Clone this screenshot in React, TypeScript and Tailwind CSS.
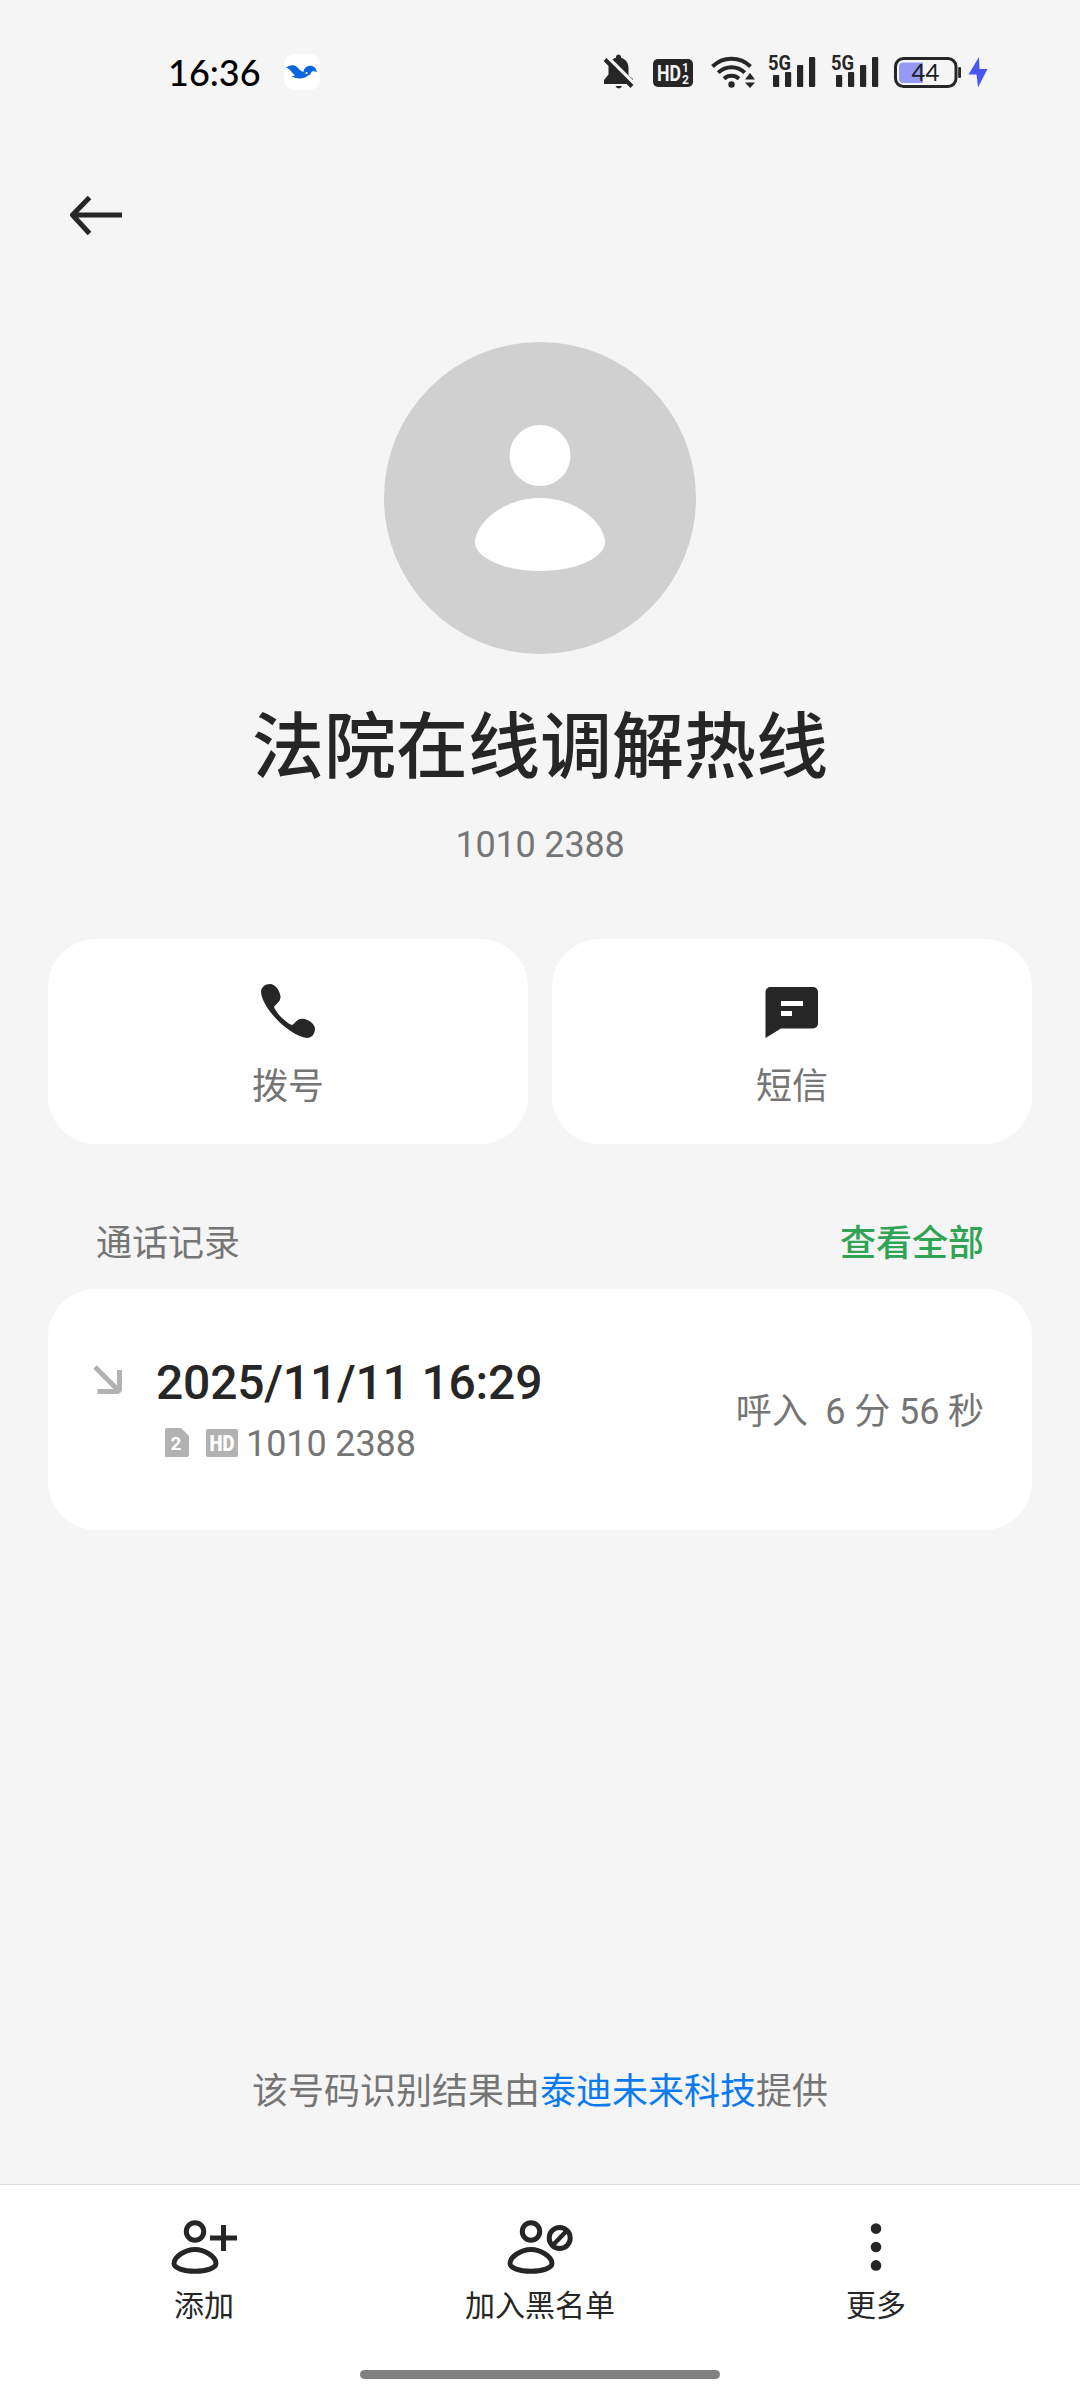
import { ReactNode } from "react";

function BellOffIcon() {
  return (
    <svg width="32" height="36" viewBox="0 0 32 36" className="shrink-0">
      <path
        d="M1 30v-4l4.500-5.500V14C5.500 8.500 8.500 5 13 3.700V2.500a2.600 2.600 0 0 1 5 0v1.200C22.500 5 25.500 8.500 25.500 14v7.500L30 25v5z"
        fill="#262626"
      />
      <path d="M12.500 32h6.500a3.400 3.400 0 0 1-6.500 0z" fill="#262626" />
      <path d="M3 1.500 33 31.500" stroke="#f5f5f5" strokeWidth="3.500" />
      <path d="M2 5.500 29 32.500" stroke="#262626" strokeWidth="4" />
    </svg>
  );
}

function HdBadge() {
  return (
    <svg width="40" height="28" viewBox="0 0 40 28" className="shrink-0 overflow-visible">
      <rect width="40" height="28" rx="5" fill="#262626" />
      <g fill="#f5f5f5" fontFamily="Roboto, sans-serif" fontWeight="700">
        <text x="4" y="22" fontSize="22" textLength="24" lengthAdjust="spacingAndGlyphs">
          HD
        </text>
        <text x="29" y="13" fontSize="12">1</text>
        <text x="29" y="25" fontSize="12">2</text>
      </g>
    </svg>
  );
}

function WifiIcon() {
  return (
    <svg width="44" height="34" viewBox="0 0 44 34" className="shrink-0">
      <g fill="none" stroke="#262626" strokeWidth="4">
        <path d="M1.500 11.500a27 27 0 0 1 38 0" />
        <path d="M7.200 17.600a19 19 0 0 1 26.600 0" />
        <path d="M13 23.700a11 11 0 0 1 15 0" />
      </g>
      <circle cx="20.500" cy="29.500" r="3.200" fill="#262626" />
      <path d="M34 24.500h10L39 18zM34 27.500h10L39 33z" fill="#262626" />
    </svg>
  );
}

function SignalIcon() {
  return (
    <svg width="47" height="34" viewBox="0 0 47 34" className="shrink-0 overflow-visible">
      <text
        x="-1"
        y="15"
        fontSize="20"
        fontWeight="700"
        fontFamily="Roboto, sans-serif"
        textLength="23"
        lengthAdjust="spacingAndGlyphs"
        fill="#262626"
      >
        5G
      </text>
      <g fill="#262626">
        <rect x="4" y="20" width="6.200" height="12" rx="1" />
        <rect x="16" y="17" width="6.200" height="15" rx="1" />
        <rect x="28" y="10" width="6.200" height="22" rx="1" />
        <rect x="40" y="2" width="6.200" height="30" rx="1" />
      </g>
    </svg>
  );
}

function BatteryIcon() {
  return (
    <svg width="68" height="32" viewBox="0 0 68 32" className="shrink-0">
      <rect x="1.500" y="2.500" width="60.500" height="28" rx="8" fill="none" stroke="#262626" strokeWidth="3" />
      <path d="M9 6.500h20v20.500H9a4 4 0 0 1-4-4v-12.500a4 4 0 0 1 4-4z" fill="#9699f5" />
      <rect x="64.200" y="11" width="2.800" height="11" rx="1" fill="#262626" />
      <text x="31.500" y="25" fontSize="24" textAnchor="middle" fontFamily="Lato, sans-serif" fill="#1c1c24">
        44
      </text>
    </svg>
  );
}

function BirdIcon() {
  return (
    <svg width="36" height="36" viewBox="0 0 36 36">
      <path
        d="M2 13.500c3-2.500 8-3.500 11-.5 2.500 2.500 4 4.500 6.500 5 0-4 4.500-7 8.500-6 2.500.6 4.500 3 5 6-1.500-.9-3.500-1-5-.5-1 .4-.8 2-2 3-1 .9-2 .8-3 1.800-3 3-11 2.500-15.500.2 1.500-.3 2.800-.8 3.500-1.500-3-1-4-6-9-7.500z"
        fill="#0a66e0"
      />
      <circle cx="22.500" cy="19" r="1.100" fill="#fff" />
    </svg>
  );
}

function StatusBar() {
  return (
    <div className="h-[144px] pl-[168px] pr-[92px] flex items-center">
      <span className="font-['Lato'] font-medium text-[36px] leading-none text-black w-[116px]">16:36</span>
      <span className="size-9 rounded-[10px] bg-white">
        <BirdIcon />
      </span>
      <div className="ml-auto flex items-center">
        <BellOffIcon />
        <span className="ml-[18px] mt-[2px]">
          <HdBadge />
        </span>
        <span className="ml-[18px]">
          <WifiIcon />
        </span>
        <span className="ml-[14px]">
          <SignalIcon />
        </span>
        <span className="ml-[16px]">
          <SignalIcon />
        </span>
        <span className="ml-[15px]">
          <BatteryIcon />
        </span>
        <svg width="20" height="32" viewBox="0 0 20 32" className="ml-[6px] shrink-0">
          <path d="M11 1 0.500 18.500h8L10 31.500 19.500 13h-8z" fill="#4a55f0" />
        </svg>
      </div>
    </div>
  );
}

function PhoneIcon() {
  return (
    <svg width="54" height="54" viewBox="0 0 54 54">
      <path
        d="M0 8C0 3.500 4 0 9 0c5.500 0 10 7 10.500 12.500.3 5.500-5.500 8-6.500 10.500C15 29 25 39 31 41c2.500-1 5-6.500 10.500-6.300C47 35 54 39.500 54 45c0 5-3.500 9-8 9C30 52.500 1.500 26 0 8z"
        fill="#262626"
      />
    </svg>
  );
}

function MessageIcon() {
  return (
    <svg width="54" height="54" viewBox="0 0 54 54">
      <path d="M0.500 8a5 5 0 0 1 5-5H48a5 5 0 0 1 5 5v31.500a5 5 0 0 1-5 5H16L0.500 54z" fill="#262626" />
      <path d="M16 17h22v5H16zM16 27h11v5H16z" fill="#fff" />
    </svg>
  );
}

function ActionCard({ icon, label }: { icon: ReactNode; label: string }) {
  return (
    <button className="flex-1 h-[205px] rounded-[48px] bg-white flex flex-col items-center pt-[45px]">
      {icon}
      <span className="mt-[23px] text-[36px] leading-[52px] text-[#757575]">{label}</span>
    </button>
  );
}

function PersonOutline({ children }: { children: ReactNode }) {
  return (
    <svg width="66" height="54" viewBox="0 0 66 54" fill="none" stroke="#262626" strokeWidth="5">
      <circle cx="24" cy="11.500" r="8.700" />
      <path d="M24 29.500c9.500 0 21 7 21 14 0 4.500-9.500 7.700-21 7.700s-21-3.200-21-7.700c0-7 11.500-14 21-14z" />
      {children}
    </svg>
  );
}

function BottomItem({ icon, label }: { icon: ReactNode; label: string }) {
  return (
    <button className="w-[336px] flex flex-col items-center">
      {icon}
      <span className="mt-[10px] text-[30px] leading-[44px] text-[#262626]">{label}</span>
    </button>
  );
}

export default function App() {
  return (
    <div className="w-[1080px] h-[2400px] bg-[#f5f5f5] flex flex-col overflow-hidden font-['Roboto','Noto_Sans_CJK_SC',sans-serif] text-[#262626]">
      <StatusBar />

      <header className="h-[144px] pl-[69px] flex items-center">
        <svg width="54" height="40" viewBox="0 0 54 40" fill="none" stroke="#262626" strokeWidth="5">
          <path d="M20.500 1.500 3.500 19l17 18.500M3.500 19H53" strokeLinejoin="round" />
        </svg>
      </header>

      <section className="pt-[54px] flex flex-col items-center">
        <svg width="312" height="312" viewBox="0 0 312 312">
          <circle cx="156" cy="156" r="156" fill="#d0d0d0" />
          <circle cx="156" cy="113.500" r="30.500" fill="#fff" />
          <path d="M156 156c36 0 65 25 65 44.500 0 14-27 28.500-65 28.500s-65-14.500-65-28.500C91 181 120 156 156 156z" fill="#fff" />
        </svg>
        <h1 className="mt-[41px] text-[72px] leading-[106px] font-medium">法院在线调解热线</h1>
        <p className="mt-[23px] text-[36px] leading-[42px] tracking-[-0.2px] text-[#757575]">1010 2388</p>
      </section>

      <div className="mt-[73px] px-12 flex gap-6">
        <ActionCard icon={<PhoneIcon />} label="拨号" />
        <ActionCard icon={<MessageIcon />} label="短信" />
      </div>

      <div className="mt-[74px] px-24 flex items-center justify-between text-[36px] leading-[52px]">
        <h2 className="text-[#757575]">通话记录</h2>
        <a className="font-medium text-[#2fa454]">查看全部</a>
      </div>

      <div className="mt-[19px] mx-12 h-[241px] rounded-[48px] bg-white pl-[45px] pr-12 flex items-center">
        <svg width="30" height="30" viewBox="0 0 30 30" fill="none" stroke="#b2b2b2" strokeWidth="5" className="mb-[60px]">
          <path d="M2 2 26 26M4.500 26.500H24a2.500 2.500 0 0 0 2.500-2.500V5" />
        </svg>
        <div className="ml-[33px]">
          <p className="text-[48px] leading-[56px] tracking-[-0.2px] font-medium">2025/11/11 16:29</p>
          <div className="mt-[12px] pl-[9px] flex items-center">
            <svg width="24" height="29" viewBox="0 0 24 29" className="mb-[2px] overflow-visible">
              <path d="M2 0h14l8 8v19a2 2 0 0 1-2 2H0V2a2 2 0 0 1 2-2z" fill="#b2b2b2" />
              <text x="5.500" y="22" fontSize="19" fontWeight="700" fontFamily="Roboto, sans-serif" fill="#fff">
                2
              </text>
            </svg>
            <svg width="32" height="28" viewBox="0 0 32 28" className="ml-[17px] mb-[1px] overflow-visible">
              <rect width="32" height="28" rx="2" fill="#b2b2b2" />
              <text
                x="3.500"
                y="22"
                fontSize="22"
                fontWeight="900"
                fontFamily="Roboto, sans-serif"
                textLength="25"
                lengthAdjust="spacingAndGlyphs"
                fill="#fff"
              >
                HD
              </text>
            </svg>
            <span className="ml-[8px] text-[36px] leading-[42px] tracking-[-0.1px] text-[#757575]">1010 2388</span>
          </div>
        </div>
        <span className="ml-auto mt-[4px] text-[36px] leading-[52px] tracking-[-0.1px] text-[#757575] whitespace-pre">
          呼入  6 分 56 秒
        </span>
      </div>

      <p className="mt-auto mb-[66px] text-center text-[36px] leading-[52px] text-[#757575]">
        该号码识别结果由<a className="text-[#0a7af0]">泰迪未来科技</a>提供
      </p>

      <footer className="h-[216px] border-t border-[#dcdcdc] bg-white flex flex-col">
        <nav className="pt-[35px] flex justify-center">
          <BottomItem
            icon={
              <PersonOutline>
                <path d="M39 18h27M52.500 5v26" />
              </PersonOutline>
            }
            label="添加"
          />
          <BottomItem
            icon={
              <PersonOutline>
                <circle cx="52.700" cy="18" r="10.500" />
                <path d="M45.500 25.500 60 10.500" strokeWidth="4.500" />
              </PersonOutline>
            }
            label="加入黑名单"
          />
          <BottomItem
            icon={
              <svg width="66" height="54" viewBox="0 0 66 54" fill="#262626">
                <circle cx="33" cy="8.600" r="5.300" />
                <circle cx="33" cy="27" r="5.300" />
                <circle cx="33" cy="45.400" r="5.300" />
              </svg>
            }
            label="更多"
          />
        </nav>
        <div className="mt-auto mb-[21px] mx-auto w-[360px] h-[9px] rounded-full bg-[#808080]" />
      </footer>
    </div>
  );
}
